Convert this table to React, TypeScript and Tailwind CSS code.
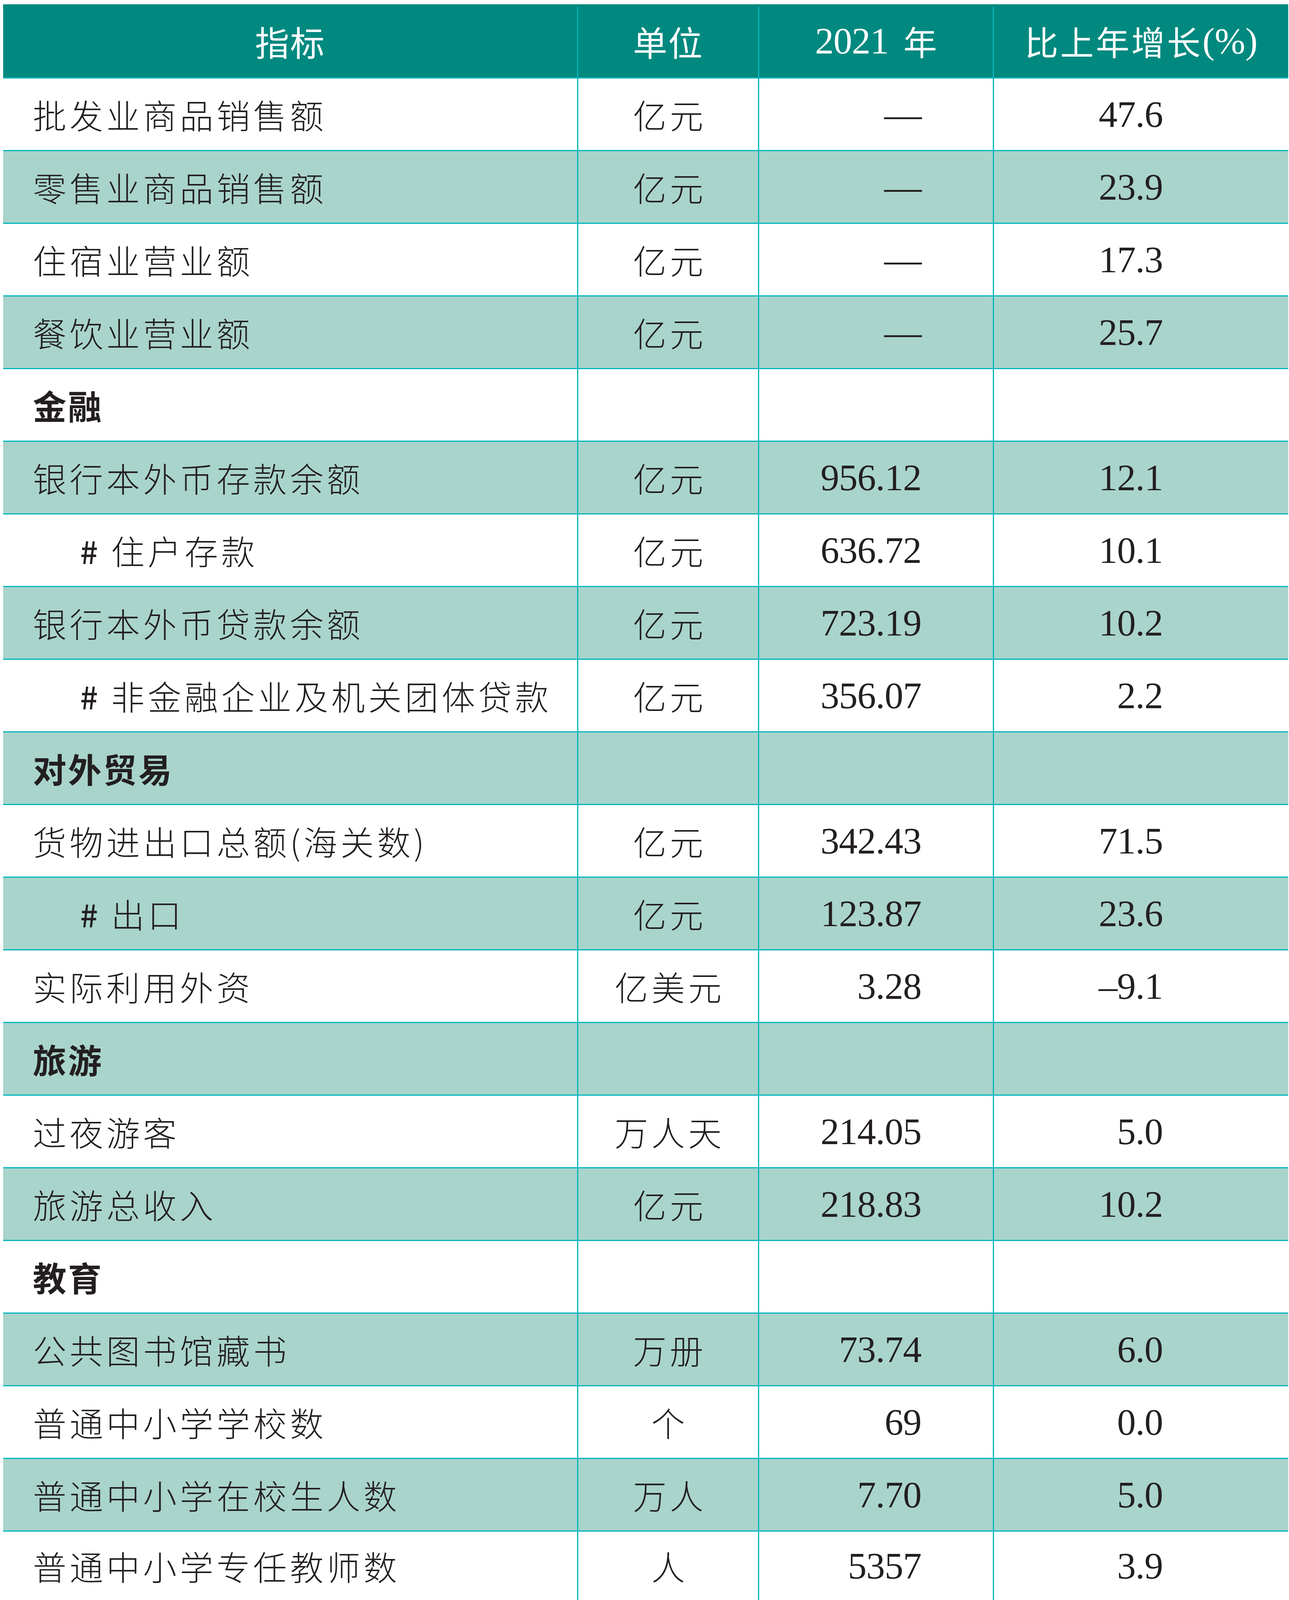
import React from "react";

type Row =
  | { section: string }
  | { label: string; indent?: boolean; unit: string; v: string; g: string };

const rows: Row[] = [
  { label: "批发业商品销售额", unit: "亿元", v: "—", g: "47.6" },
  { label: "零售业商品销售额", unit: "亿元", v: "—", g: "23.9" },
  { label: "住宿业营业额", unit: "亿元", v: "—", g: "17.3" },
  { label: "餐饮业营业额", unit: "亿元", v: "—", g: "25.7" },
  { section: "金融" },
  { label: "银行本外币存款余额", unit: "亿元", v: "956.12", g: "12.1" },
  { label: "住户存款", indent: true, unit: "亿元", v: "636.72", g: "10.1" },
  { label: "银行本外币贷款余额", unit: "亿元", v: "723.19", g: "10.2" },
  { label: "非金融企业及机关团体贷款", indent: true, unit: "亿元", v: "356.07", g: "2.2" },
  { section: "对外贸易" },
  { label: "货物进出口总额(海关数)", unit: "亿元", v: "342.43", g: "71.5" },
  { label: "出口", indent: true, unit: "亿元", v: "123.87", g: "23.6" },
  { label: "实际利用外资", unit: "亿美元", v: "3.28", g: "–9.1" },
  { section: "旅游" },
  { label: "过夜游客", unit: "万人天", v: "214.05", g: "5.0" },
  { label: "旅游总收入", unit: "亿元", v: "218.83", g: "10.2" },
  { section: "教育" },
  { label: "公共图书馆藏书", unit: "万册", v: "73.74", g: "6.0" },
  { label: "普通中小学学校数", unit: "个", v: "69", g: "0.0" },
  { label: "普通中小学在校生人数", unit: "万人", v: "7.70", g: "5.0" },
  { label: "普通中小学专任教师数", unit: "人", v: "5357", g: "3.9" },
];

const cjk = "font-['Noto_Sans_CJK_SC',sans-serif]";
const serif = "font-['Liberation_Serif','Noto_Sans_CJK_SC',serif]";

export default function App() {
  return (
    <div className="bg-white h-[4096px] pt-[11px] pl-[8px] text-[#231f20] overflow-hidden">
      <div className="w-[3289px]">
        {/* header */}
        <div className="grid grid-cols-[1472px_463px_601px_753px] h-[190px] pt-[6px] bg-[#01897f] border-b-[3px] border-[#00b5bd] text-white">
          <div className={`flex items-center justify-center pb-[6px] border-r-[3px] border-[#00b5bd] text-[88px] tracking-[2px] ${cjk}`}>
            指标
          </div>
          <div className={`flex items-center justify-center pb-[6px] border-r-[3px] border-[#00b5bd] text-[88px] tracking-[2px] ${cjk}`}>
            单位
          </div>
          <div className="flex items-center justify-center pb-[6px] border-r-[3px] border-[#00b5bd]">
            <span className={`text-[96px] tracking-[-1px] ${serif}`}>2021</span>
            <span className={`ml-[38px] text-[86px] ${cjk}`}>年</span>
          </div>
          <div className="flex items-center justify-center pb-[6px]">
            <span className={`text-[86px] tracking-[5px] ${cjk}`}>比上年增长</span>
            <span className={`text-[94px] ${serif}`}>(%)</span>
          </div>
        </div>

        {rows.map((r, i) => {
          const bg = i % 2 === 1 ? "bg-[#a9d4cb]" : "bg-white";
          const last = i === rows.length - 1;
          const rowCls = `grid grid-cols-[1472px_463px_601px_753px] ${bg} ${
            last ? "h-[175px]" : "h-[186px] border-b-[3px] border-[#00b5bd]"
          }`;
          if ("section" in r) {
            return (
              <div key={i} className={rowCls}>
                <div className={`flex items-center pl-[76px] border-r-[3px] border-[#00b5bd] text-[86px] font-bold tracking-[4px] ${cjk}`}>
                  {r.section}
                </div>
                <div className="border-r-[3px] border-[#00b5bd]" />
                <div className="border-r-[3px] border-[#00b5bd]" />
                <div />
              </div>
            );
          }
          return (
            <div key={i} className={rowCls}>
              <div
                className={`flex items-center ${r.indent ? "pl-[197px]" : "pl-[76px]"} border-r-[3px] border-[#00b5bd] text-[86px] font-light tracking-[8px] whitespace-nowrap ${cjk}`}
              >
                {r.indent && <span className="inline-block w-[79px] text-[80px] font-medium tracking-normal">#</span>}
                <span>{r.label}</span>
              </div>
              <div
                className={`flex items-center justify-center pl-[8px] border-r-[3px] border-[#00b5bd] text-[86px] font-light tracking-[8px] ${cjk}`}
              >
                {r.unit}
              </div>
              <div className={`flex items-center justify-end pr-[183px] border-r-[3px] border-[#00b5bd] text-[96px] tracking-[-1px] ${serif}`}>
                {r.v}
              </div>
              <div className={`flex items-center justify-end pr-[321px] text-[96px] tracking-[-1px] ${serif}`}>{r.g}</div>
            </div>
          );
        })}
      </div>
    </div>
  );
}
